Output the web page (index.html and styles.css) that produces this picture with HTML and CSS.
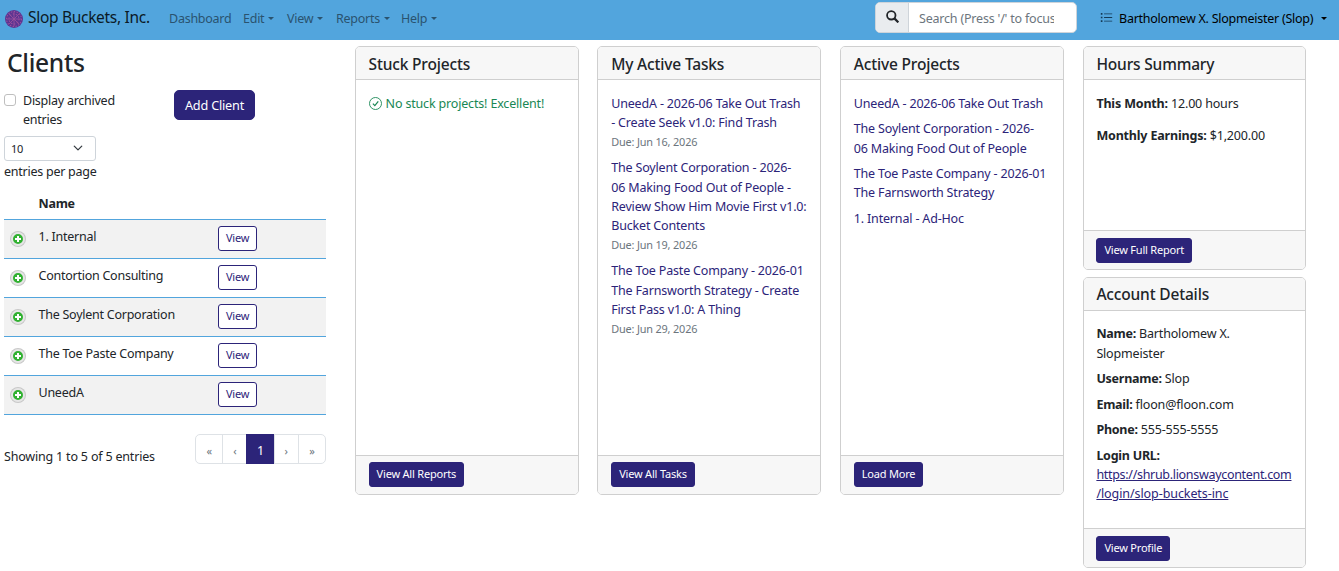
FILE: index.html
```html
<!DOCTYPE html>
<html lang="en">
<head>
    <meta charset="UTF-8">
    <meta name="viewport" content="width=device-width, initial-scale=1.0">
    <title>Slop Buckets, Inc.</title>
    <link rel="stylesheet" href="styles.css">
</head>
<body>
    <nav class="navbar">
        <a class="brand" href="#">
            <svg class="brand-logo" viewBox="0 0 18 18">
                <circle cx="9" cy="9" r="9" fill="#5c3591"/>
                <g fill="none" stroke="#994f9c" stroke-width="1.1">
                    <circle cx="9" cy="9" r="7.5" stroke-dasharray="1.5 1.4"/>
                    <circle cx="9" cy="9" r="5" stroke-dasharray="1.5 1.6"/>
                    <path d="M9 2v14M2 9h14M4 4l10 10M14 4L4 14" stroke-width=".9"/>
                </g>
            </svg>
            <span>Slop Buckets, Inc.</span>
        </a>
        <ul class="nav">
            <li class="nav-dashboard"><a href="#">Dashboard</a></li>
            <li class="nav-edit"><a class="caret" href="#">Edit</a></li>
            <li class="nav-view"><a class="caret" href="#">View</a></li>
            <li class="nav-reports"><a class="caret" href="#">Reports</a></li>
            <li class="nav-help"><a class="caret" href="#">Help</a></li>
        </ul>
        <div class="search">
            <span class="search-icon">
                <svg width="13" height="13" viewBox="0 0 16 16" fill="none" stroke="#212529" stroke-width="2.2">
                    <circle cx="6.5" cy="6.5" r="5.2"/>
                    <path d="M10.3 10.3l4.9 4.9" stroke-width="2.8"/>
                </svg>
            </span>
            <input type="text" placeholder="Search (Press '/' to focus)">
        </div>
        <a class="user" href="#">
            <svg width="13" height="13" viewBox="0 0 16 16" fill="#153a56">
                <path d="M5 3h10v1H5zM5 7.5h10v1H5zM5 12h10v1H5zM1 2.5h2v2H1zM1 7h2v2H1zM1 11.500h2v2H1z"/>
            </svg>
            <span class="caret">Bartholomew X. Slopmeister (Slop)</span>
        </a>
    </nav>

    <main class="page">
        <section class="clients">
            <h1>Clients</h1>
            <div class="toolbar">
                <label class="archived">
                    <input type="checkbox">
                    <span>Display archived entries</span>
                </label>
                <button class="btn btn-add">Add Client</button>
            </div>
            <div class="length">
                <div class="select">
                    <span>10</span>
                    <svg width="10" height="10" viewBox="0 0 16 16" fill="none" stroke="#343a40" stroke-width="2" stroke-linecap="round" stroke-linejoin="round">
                        <path d="M2 5l6 6 6-6"/>
                    </svg>
                </div>
                <span>entries per page</span>
            </div>

            <table>
                <thead>
                    <tr><th class="col-toggle"></th><th class="col-name">Name</th><th></th></tr>
                </thead>
                <tbody>
                    <tr><td><span class="expand"></span></td><td>1. Internal</td><td><button class="btn-outline">View</button></td></tr>
                    <tr><td><span class="expand"></span></td><td>Contortion Consulting</td><td><button class="btn-outline">View</button></td></tr>
                    <tr><td><span class="expand"></span></td><td>The Soylent Corporation</td><td><button class="btn-outline">View</button></td></tr>
                    <tr><td><span class="expand"></span></td><td>The Toe Paste Company</td><td><button class="btn-outline">View</button></td></tr>
                    <tr><td><span class="expand"></span></td><td>UneedA</td><td><button class="btn-outline">View</button></td></tr>
                </tbody>
            </table>

            <div class="table-footer">
                <span class="info">Showing 1 to 5 of 5 entries</span>
                <div class="pagination">
                    <span class="wide">«</span>
                    <span>‹</span>
                    <span class="wide active">1</span>
                    <span>›</span>
                    <span class="wide">»</span>
                </div>
            </div>
        </section>

        <section class="dashboard">
            <div class="card">
                <h5>Stuck Projects</h5>
                <div class="card-body">
                    <p class="success">
                        <svg width="13" height="13" viewBox="0 0 16 16" fill="none" stroke="#198754" stroke-width="1.1">
                            <circle cx="8" cy="8" r="7.4"/>
                            <path d="M4.800 8.200l2.400 2.500 4.200-5.200" stroke-width="1.5"/>
                        </svg>
                        <span>No stuck projects! Excellent!</span>
                    </p>
                </div>
                <div class="card-footer"><button class="btn">View All Reports</button></div>
            </div>

            <div class="card">
                <h5>My Active Tasks</h5>
                <div class="card-body tasks">
                    <p><a href="#">UneedA - 2026-06 Take Out Trash<br>- Create Seek v1.0: Find Trash</a><small>Due: Jun 16, 2026</small></p>
                    <p><a href="#">The Soylent Corporation - 2026-<br>06 Making Food Out of People -<br>Review Show Him Movie First v1.0:<br>Bucket Contents</a><small>Due: Jun 19, 2026</small></p>
                    <p><a href="#">The Toe Paste Company - 2026-01<br>The Farnsworth Strategy - Create<br>First Pass v1.0: A Thing</a><small>Due: Jun 29, 2026</small></p>
                </div>
                <div class="card-footer"><button class="btn">View All Tasks</button></div>
            </div>

            <div class="card">
                <h5>Active Projects</h5>
                <div class="card-body">
                    <p><a href="#">UneedA - 2026-06 Take Out Trash</a></p>
                    <p><a href="#">The Soylent Corporation - 2026-<br>06 Making Food Out of People</a></p>
                    <p><a href="#">The Toe Paste Company - 2026-01<br>The Farnsworth Strategy</a></p>
                    <p><a href="#">1. Internal - Ad-Hoc</a></p>
                </div>
                <div class="card-footer"><button class="btn">Load More</button></div>
            </div>

            <div class="stack">
                <div class="card hours">
                    <h5>Hours Summary</h5>
                    <div class="card-body">
                        <p><strong>This Month:</strong> 12.00 hours</p>
                        <p><strong>Monthly Earnings:</strong> $1,200.00</p>
                    </div>
                    <div class="card-footer"><button class="btn">View Full Report</button></div>
                </div>
                <div class="card account">
                    <h5>Account Details</h5>
                    <div class="card-body">
                        <p><strong>Name:</strong> Bartholomew X.<br>Slopmeister</p>
                        <p><strong>Username:</strong> Slop</p>
                        <p><strong>Email:</strong> floon@floon.com</p>
                        <p><strong>Phone:</strong> 555-555-5555</p>
                        <p><strong>Login URL:</strong><br><a class="url" href="#">https://shrub.lionswaycontent.com<br><span class="url-path">/login/slop-buckets-inc</span></a></p>
                    </div>
                    <div class="card-footer"><button class="btn">View Profile</button></div>
                </div>
            </div>
        </section>
    </main>
</body>
</html>
```
FILE: styles.css
```css
* {
    box-sizing: border-box;
}

body {
    margin: 0;
    font-family: "Segoe UI", "Noto Sans", sans-serif;
    font-size: 12.5px;
    line-height: 19.2px;
    letter-spacing: -0.25px;
    color: #212529;
    background: #fff;
    white-space: nowrap;
}

a {
    color: #2c2479;
    text-decoration: none;
}

button, input {
    font-family: inherit;
    letter-spacing: inherit;
}

/* Navbar */
.navbar {
    display: flex;
    align-items: flex-start;
    height: 40px;
    padding-left: 5px;
    background-color: #52a5dd;
}

.brand {
    display: flex;
    align-items: center;
    width: 164px;
    height: 36px;
    font-size: 15.5px;
    letter-spacing: -0.3px;
    color: #0b1a26;
}

.brand-logo {
    width: 18px;
    height: 18px;
    margin: 2px 5px 0 0;
}

.nav {
    display: flex;
    width: 706px;
    margin: 0;
    padding: 9px 0 0;
    list-style: none;
}

.nav a {
    color: #2a536f;
}

.nav-dashboard {
    width: 74px;
}

.nav-edit {
    width: 44px;
}

.nav-view {
    width: 49px;
}

.nav-reports {
    width: 65px;
}

.caret::after {
    content: "";
    display: inline-block;
    margin-left: 4px;
    vertical-align: 3px;
    border-top: 3px solid;
    border-left: 3px solid transparent;
    border-right: 3px solid transparent;
}

.search {
    display: flex;
    width: 202px;
    height: 31px;
    margin-top: 2px;
    border: 1px solid #ced4da;
    border-radius: 5px;
    background: #fff;
    overflow: hidden;
}

.search-icon {
    display: flex;
    align-items: center;
    justify-content: center;
    width: 33px;
    padding-bottom: 2px;
    background: #e9ecef;
    border-right: 1px solid #ced4da;
}

.search input {
    width: 145px;
    padding: 2px 0 0 10px;
    border: 0;
    outline: 0;
    font-size: 12.5px;
    letter-spacing: -0.2px;
}

.search input::placeholder {
    color: #6c757d;
}

.user {
    display: flex;
    gap: 6px;
    margin-left: 23px;
    padding-top: 9px;
    color: #000;
}

.user svg {
    margin-top: 2px;
}

.user .caret::after {
    margin-left: 8px;
}

/* Page */
.page {
    display: flex;
    padding: 6px 0 0 4px;
}

.clients {
    width: 322px;
    margin-right: 28.8px;
}

h1 {
    margin: 0 0 11px 3px;
    font-size: 24.6px;
    font-weight: 500;
    line-height: 34px;
    letter-spacing: -0.3px;
}

.toolbar {
    display: flex;
}

.archived {
    display: flex;
    gap: 7px;
    width: 170px;
    white-space: normal;
}

.archived input {
    appearance: none;
    flex: none;
    width: 12px;
    height: 12px;
    margin: 3px 0 0;
    border: 1px solid #bfbfbf;
    border-radius: 3px;
}

.archived span {
    width: 110px;
}

.btn {
    height: 25px;
    padding: 0 7px 2px;
    font-size: 11px;
    letter-spacing: -0.2px;
    color: #fff;
    background: #2c2479;
    border: 1px solid #2c2479;
    border-radius: 3px;
}

.btn-add {
    width: 81px;
    height: 30px;
    margin-top: -1px;
    padding: 0;
    font-size: 12.7px;
    border-radius: 5px;
}

.length {
    display: flex;
    flex-direction: column;
    margin-top: 7px;
}

.select {
    display: flex;
    align-items: center;
    justify-content: space-between;
    width: 92px;
    height: 25px;
    margin-bottom: 1px;
    padding: 0 12px 1px 6px;
    font-size: 11px;
    border: 1px solid #ced4da;
    border-radius: 3px;
}

table {
    width: 100%;
    margin-top: 5px;
    border-collapse: collapse;
    table-layout: fixed;
}

th {
    height: 33px;
    padding: 1px 0 0;
    text-align: left;
    border-bottom: 1px solid #52a5dd;
}

.col-toggle {
    width: 34.5px;
}

.col-name {
    width: 179.5px;
}

td {
    height: 39px;
    padding: 7px 0 0;
    vertical-align: top;
    border-bottom: 1px solid #52a5dd;
}

tbody tr:nth-child(odd) {
    background: #f2f2f2;
}

.expand {
    display: block;
    width: 14px;
    height: 14px;
    margin: 5px 0 0 7px;
    border: 2px solid #e6e6e6;
    border-radius: 50%;
    box-shadow: 0 0 0 1px #c8c8c8;
    background:
        linear-gradient(#fff, #fff) center / 6px 2px no-repeat,
        linear-gradient(#fff, #fff) center / 2px 6px no-repeat,
        #31b131;
}

.btn-outline {
    display: block;
    width: 39px;
    height: 25px;
    margin-top: -1px;
    padding: 0 0 2px;
    font-size: 11px;
    color: #2c2479;
    background: #fff;
    border: 1px solid #2c2479;
    border-radius: 3px;
}

.table-footer {
    display: flex;
    justify-content: space-between;
    margin-top: 19px;
}

.info {
    padding-top: 13px;
    letter-spacing: -0.19px;
}

.pagination {
    display: flex;
    width: 131px;
    height: 30px;
    border: 1px solid #dee2e6;
    border-radius: 5px;
}

.pagination span {
    flex: 24;
    padding-top: 6px;
    text-align: center;
    color: #6c757d;
    font-size: 11px;
}

.pagination .wide {
    flex: 27;
}

.pagination span + span {
    border-left: 1px solid #dee2e6;
}

.pagination .active {
    margin: -1px 0;
    padding-top: 7px;
    font-size: 12.5px;
    color: #fff;
    background: #2c2479;
    border-left-color: #2c2479;
}

/* Dashboard cards */
.dashboard {
    display: grid;
    grid-template-columns: repeat(4, 223.8px);
    gap: 18.8px;
    align-items: start;
    letter-spacing: -0.17px;
}

.card {
    display: flex;
    flex-direction: column;
    height: 449px;
    border: 1px solid #cfcfcf;
    border-radius: 5px;
    overflow: hidden;
}

.card h5 {
    height: 33px;
    margin: 0;
    padding: 7px 12.8px 0;
    font-size: 15.5px;
    font-weight: 500;
    line-height: 20px;
    background: #f7f7f7;
    border-bottom: 1px solid #cfcfcf;
}

.card-body {
    flex: 1;
    padding: 13.8px 12.8px 0;
}

.card-body p {
    margin: 0 0 6.4px;
}

.tasks p {
    margin-bottom: 7px;
}

.card-footer {
    height: 39px;
    padding: 6px 12.8px;
    line-height: 0;
    background: #f7f7f7;
    border-top: 1px solid #cfcfcf;
}

small {
    display: block;
    font-size: 10.9px;
    color: #6c757d;
}

.success {
    display: flex;
    gap: 4px;
    color: #198754;
}

.success svg {
    margin-top: 3px;
}

.stack {
    display: grid;
    gap: 7px;
}

.hours {
    height: 224px;
}

.hours p {
    margin-bottom: 12.8px;
}

.account {
    height: 291px;
}

.account h5 {
    padding-top: 6px;
}

.account .card-body {
    padding-top: 13.4px;
}

.stack .card-footer {
    padding-top: 7px;
}

.account strong {
    letter-spacing: -0.25px;
}

.url {
    text-decoration: underline;
    letter-spacing: -0.31px;
}

.url-path {
    letter-spacing: -0.08px;
}
```
